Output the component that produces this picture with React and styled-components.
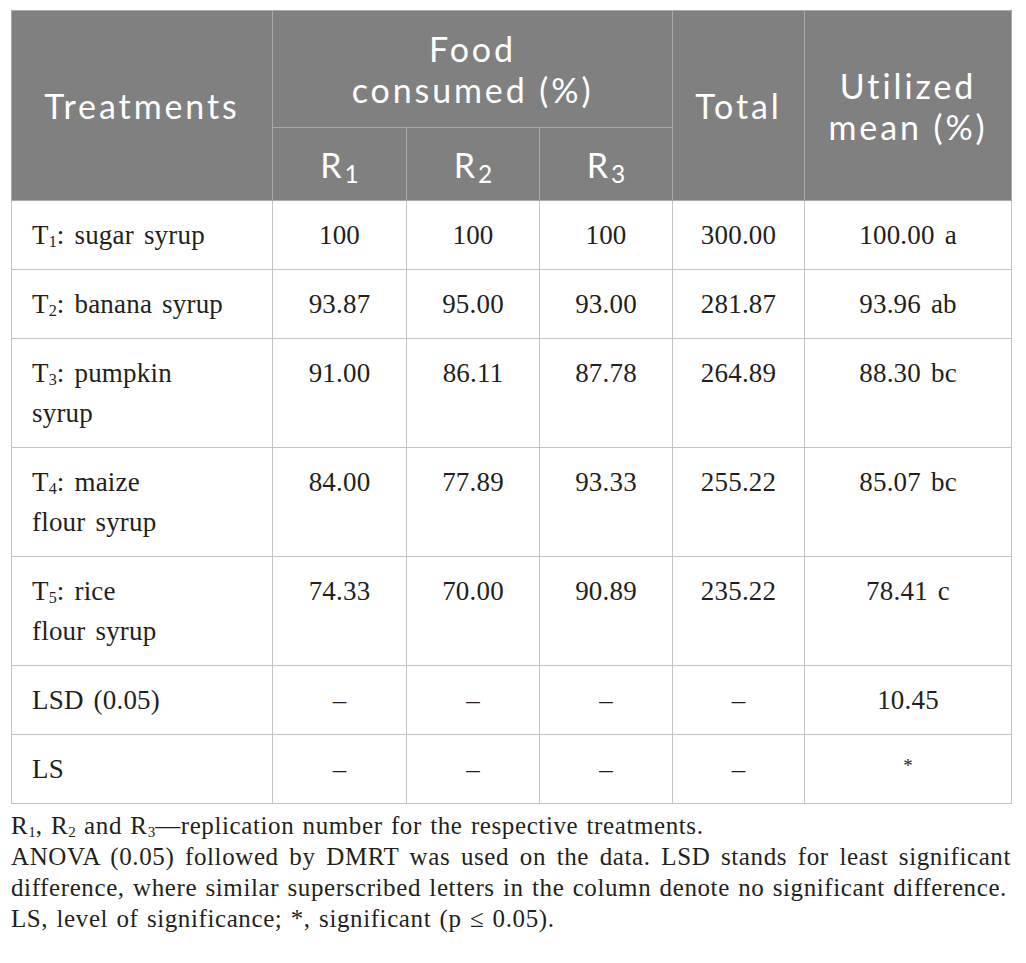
import React from 'react'
import styled, {createGlobalStyle} from 'styled-components'

const GlobalStyle = createGlobalStyle`
body {
  margin: 0;
  padding: 10px 15px 0 11px;
  background: #fff;
}
`

const Wrapper = styled.div`
width: 1000px;
font-family: "Liberation Serif", "Times New Roman", serif;
color: #231f20;
`

const Table = styled.table`
width: 1000px;
border-collapse: collapse;
table-layout: fixed;
font-family: "Liberation Serif", "Times New Roman", serif;
color: #231f20;
`

const HeadCell = styled.th`
background-color: #808080;
color: #fff;
font-family: Lato, "Open Sans", sans-serif;
font-weight: normal;
font-size: 34px;
letter-spacing: 2.9px;
line-height: 41px;
text-align: center;
vertical-align: middle;
border: 1px solid #a9a9a9;
height: ${props => props.h || 'auto'};
padding: 0 2px;
`

const Cell = styled.td`
border: 1px solid #c4c4c4;
font-size: 27px;
letter-spacing: 0.2px;
word-spacing: 3px;
line-height: 40px;
vertical-align: top;
text-align: ${props => props.left ? 'left' : 'center'};
padding: 14px ${props => props.left ? '8px 14px 20px' : '6px 14px'};
`

const Sub = styled.sub`
font-size: 0.6em;
vertical-align: -0.2em;
line-height: 0;
letter-spacing: 0;
`

const HeadSub = styled.sub`
font-size: 0.72em;
vertical-align: -0.22em;
line-height: 0;
letter-spacing: 0;
`

const Star = styled.span`
font-size: 19px;
line-height: 0;
vertical-align: 0.3em;
`

const Notes = styled.div`
padding-top: 6px;
font-size: 25px;
line-height: 31px;
letter-spacing: 0.6px;
word-spacing: 1.5px;
`

const NoteLine = styled.div`
text-align: ${props => props.justify ? 'justify' : 'left'};
text-align-last: ${props => props.justify ? 'justify' : 'auto'};
white-space: nowrap;
`

const rows = [
  {n: 1, name: ['sugar syrup'], v: ['100', '100', '100', '300.00', '100.00 a']},
  {n: 2, name: ['banana syrup'], v: ['93.87', '95.00', '93.00', '281.87', '93.96 ab']},
  {n: 3, name: ['pumpkin', 'syrup'], v: ['91.00', '86.11', '87.78', '264.89', '88.30 bc']},
  {n: 4, name: ['maize', 'flour syrup'], v: ['84.00', '77.89', '93.33', '255.22', '85.07 bc']},
  {n: 5, name: ['rice', 'flour syrup'], v: ['74.33', '70.00', '90.89', '235.22', '78.41 c']},
]

export default function App(){
    return(
        <Wrapper>
            <GlobalStyle />
            <Table>
                <colgroup>
                    <col style={{width: 261}} />
                    <col style={{width: 134}} />
                    <col style={{width: 133}} />
                    <col style={{width: 133}} />
                    <col style={{width: 132}} />
                    <col style={{width: 207}} />
                </colgroup>
                <thead>
                    <tr>
                        <HeadCell rowSpan={2}>Treatments</HeadCell>
                        <HeadCell colSpan={3} h="116px">Food<br/>consumed (%)</HeadCell>
                        <HeadCell rowSpan={2}>Total</HeadCell>
                        <HeadCell rowSpan={2}>Utilized<br/>mean (%)</HeadCell>
                    </tr>
                    <tr>
                        <HeadCell h="72px">R<HeadSub>1</HeadSub></HeadCell>
                        <HeadCell h="72px">R<HeadSub>2</HeadSub></HeadCell>
                        <HeadCell h="72px">R<HeadSub>3</HeadSub></HeadCell>
                    </tr>
                </thead>
                <tbody>
                    {rows.map(r => (
                        <tr key={r.n}>
                            <Cell left>
                                T<Sub>{r.n}</Sub>: {r.name[0]}
                                {r.name[1] && <><br/>{r.name[1]}</>}
                            </Cell>
                            {r.v.map((x, i) => <Cell key={i}>{x}</Cell>)}
                        </tr>
                    ))}
                    <tr>
                        <Cell left>LSD (0.05)</Cell>
                        <Cell>–</Cell>
                        <Cell>–</Cell>
                        <Cell>–</Cell>
                        <Cell>–</Cell>
                        <Cell>10.45</Cell>
                    </tr>
                    <tr>
                        <Cell left>LS</Cell>
                        <Cell>–</Cell>
                        <Cell>–</Cell>
                        <Cell>–</Cell>
                        <Cell>–</Cell>
                        <Cell><Star>*</Star></Cell>
                    </tr>
                </tbody>
            </Table>
            <Notes>
                <NoteLine>R<Sub>1</Sub>, R<Sub>2</Sub> and R<Sub>3</Sub>—replication number for the respective treatments.</NoteLine>
                <NoteLine justify>ANOVA (0.05) followed by DMRT was used on the data. LSD stands for least significant</NoteLine>
                <NoteLine>difference, where similar superscribed letters in the column denote no significant difference.</NoteLine>
                <NoteLine>LS, level of significance; *, significant (p ≤ 0.05).</NoteLine>
            </Notes>
        </Wrapper>
    )
}
